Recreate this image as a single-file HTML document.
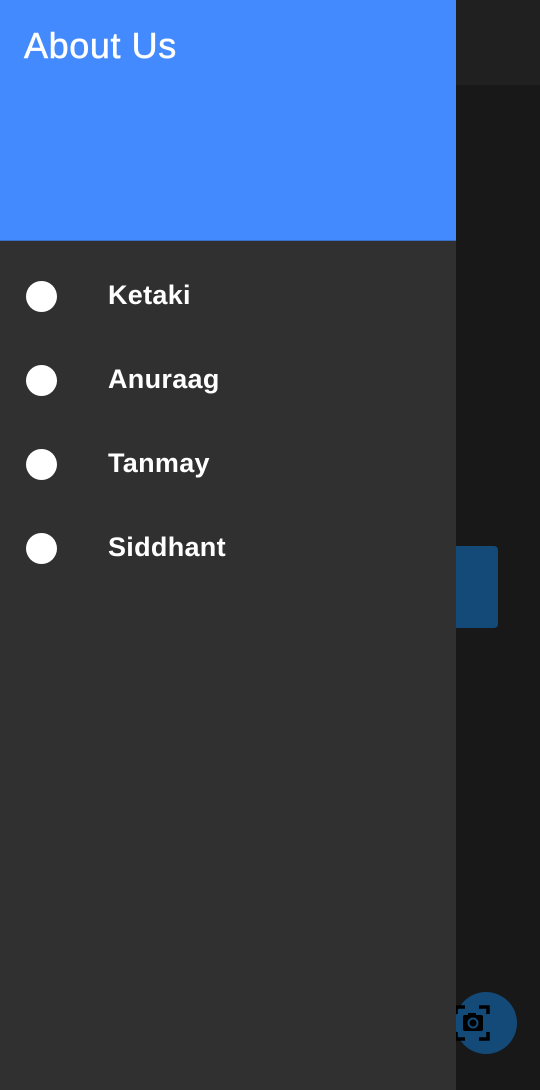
<!DOCTYPE html>
<html><head><meta charset="utf-8"><style>
*{margin:0;padding:0;box-sizing:border-box}
body{width:540px;height:1090px;background:#181818;position:relative;overflow:hidden;font-family:"Liberation Sans",sans-serif}
.appbar{position:absolute;left:0;top:0;width:540px;height:85px;background:#202020}
.btn{position:absolute;left:440px;top:546px;width:58px;height:82px;background:#144a78;border-radius:4px}
.fab{position:absolute;left:455px;top:992px;width:62px;height:62px;border-radius:50%;background:#144a78}
.drawer{position:absolute;left:0;top:0;width:456px;height:1090px;background:#303030}
.head{height:241px;background:#448aff;position:relative;border-bottom:1px solid #3a6fc8}
.head h1{position:absolute;left:24px;top:25px;font-size:36px;font-weight:normal;color:#fff;letter-spacing:0.6px;-webkit-text-stroke:0.5px #fff}
.item{position:absolute;left:0;height:40px;width:456px}
.item i{position:absolute;left:26px;top:5px;width:31px;height:31px;border-radius:50%;background:#fff}
.item span{position:absolute;left:108px;top:4px;font-size:27px;font-weight:bold;color:#fff;letter-spacing:0.3px}
</style></head><body>
<div class="appbar"></div>
<div class="btn"></div>
<div class="fab"><svg style="position:absolute;left:-4px;top:10px" width="46" height="42" viewBox="0 0 46 42"><path d="M5 12V5h9M28 5h9v7M37 30v7h-9M14 37H5v-7" stroke="#000" stroke-width="3.5" fill="none"/><rect x="12" y="13" width="20" height="16" rx="2" fill="#000"/><rect x="17" y="11" width="8" height="3" fill="#000"/><circle cx="22" cy="21" r="4.5" fill="none" stroke="#144a78" stroke-width="2"/></svg></div>
<div class="drawer">
<div class="head"><h1>About Us</h1></div>
<div class="item" style="top:276px"><i></i><span>Ketaki</span></div>
<div class="item" style="top:360px"><i></i><span>Anuraag</span></div>
<div class="item" style="top:444px"><i></i><span>Tanmay</span></div>
<div class="item" style="top:528px"><i></i><span>Siddhant</span></div>
</div>
</body></html>
